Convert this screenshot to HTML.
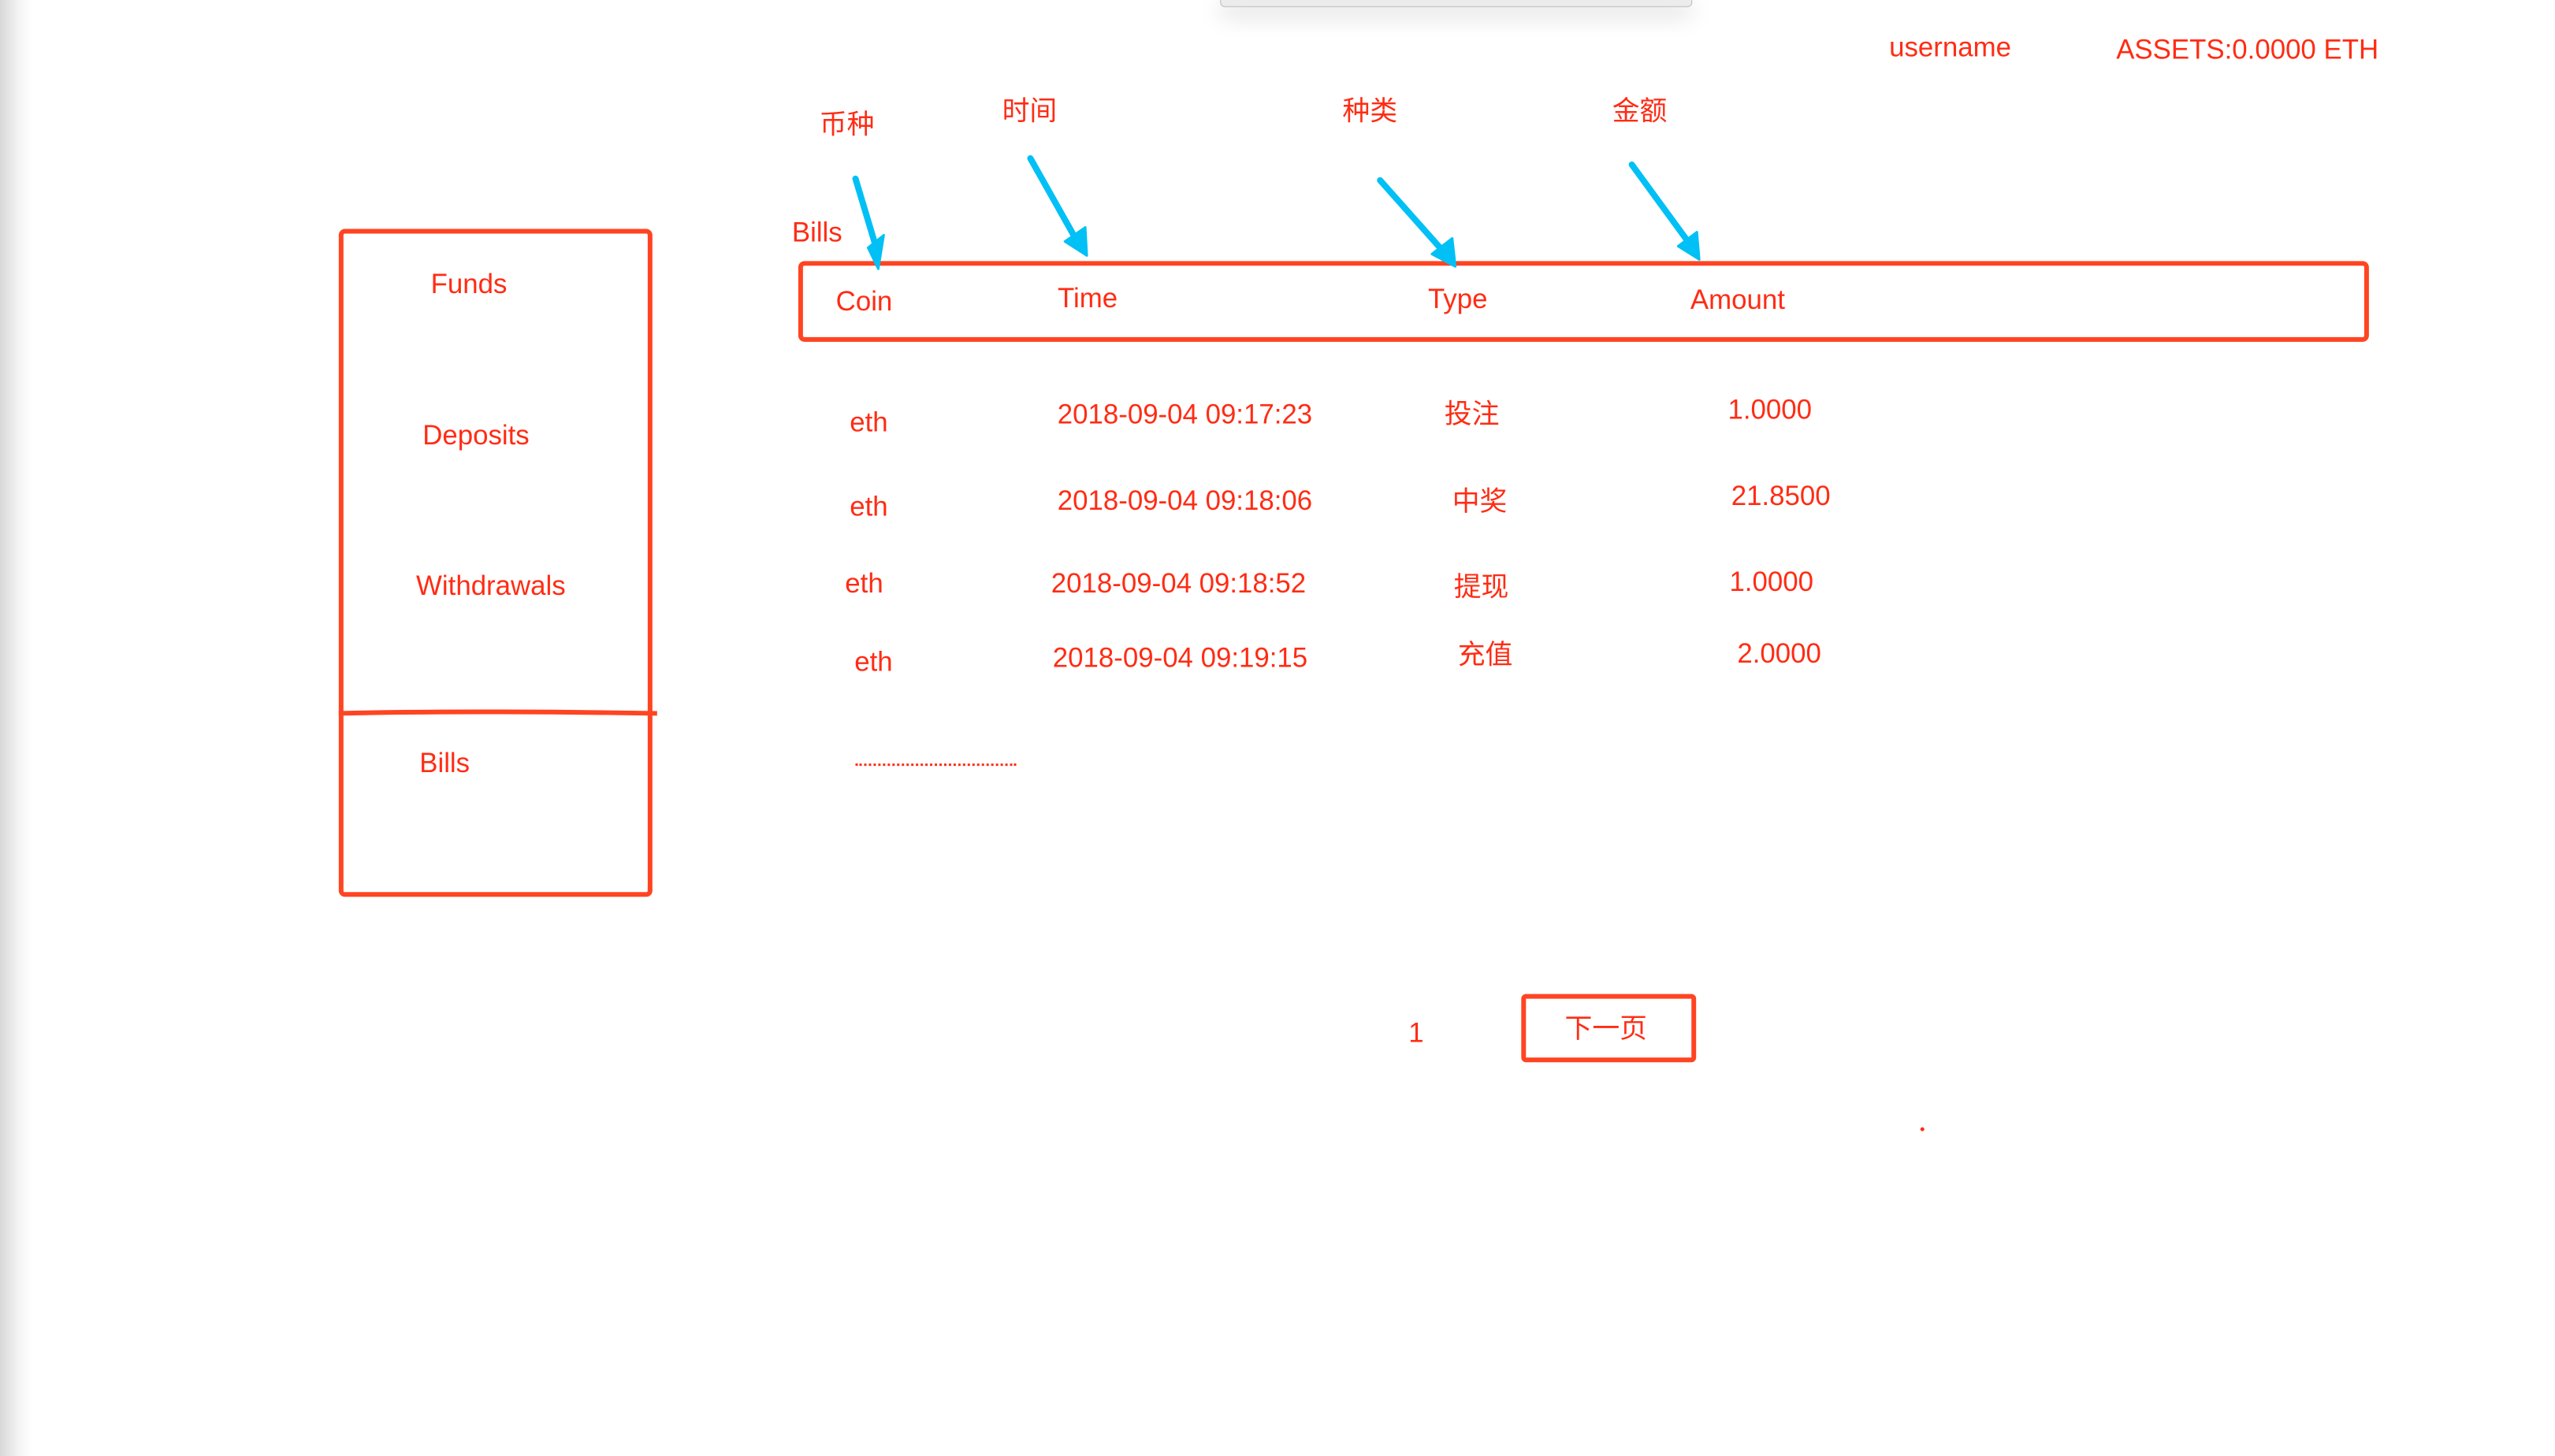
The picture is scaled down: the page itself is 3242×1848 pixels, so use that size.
<!DOCTYPE html>
<html><head><meta charset="utf-8"><style>
html,body{margin:0;padding:0}
body{width:3242px;height:1848px;position:relative;overflow:hidden;background:#fff;font-family:"Liberation Sans","Noto Sans CJK SC",sans-serif;color:#ff2c14;font-size:35px}
#w{position:absolute;left:0;top:0;width:3242px;height:1848px;transform:scale(0.995);transform-origin:0 0}
.t{position:absolute;transform:translate(-50%,-50%);white-space:nowrap}
.shadow{position:absolute;left:0;top:0;width:40px;height:1848px;background:linear-gradient(to right,#d8d8d8,#f4f4f4 60%,#fff)}
.pop{position:absolute;left:1556px;top:-4px;width:600px;height:11px;background:#ececec;border:1px solid #bbb;border-radius:0 0 6px 6px;box-shadow:0 10px 30px rgba(0,0,0,.18)}
.box{position:absolute;border:6px solid #ff4422;border-radius:8px;box-sizing:border-box}
</style></head><body>
<div class="shadow"></div>
<div id="w">
<div class="pop"></div>
<span class="t" style="left:2487px;top:61px">username</span>
<span class="t" style="left:2866px;top:64px">ASSETS:0.0000 ETH</span>

<span class="t" style="left:1080px;top:156px">币种</span>
<span class="t" style="left:1313px;top:139px">时间</span>
<span class="t" style="left:1747px;top:139px">种类</span>
<span class="t" style="left:2091px;top:139px">金额</span>
<span class="t" style="left:1042px;top:297px">Bills</span>

<div class="box" style="left:1018px;top:333px;width:2003px;height:103px"></div>
<span class="t" style="left:1102px;top:385px">Coin</span>
<span class="t" style="left:1387px;top:381px">Time</span>
<span class="t" style="left:1859px;top:382px">Type</span>
<span class="t" style="left:2216px;top:383px">Amount</span>

<svg style="position:absolute;left:0;top:0" width="3242" height="1848">
<g fill="#00c0f5" stroke="#00c0f5" stroke-linecap="round" stroke-linejoin="round">
<path d="M1091 228 L1118 318" stroke-width="8" fill="none"/>
<path d="M1107 316 L1127 300 L1120 343 Z" stroke-width="3"/>
<path d="M1314 202 L1372 305" stroke-width="8" fill="none"/>
<path d="M1358 308 L1384 290 L1386 326 Z" stroke-width="3"/>
<path d="M1760 230 L1840 320" stroke-width="8" fill="none"/>
<path d="M1826 324 L1852 304 L1856 340 Z" stroke-width="3"/>
<path d="M2081 210 L2154 310" stroke-width="8" fill="none"/>
<path d="M2140 314 L2164 296 L2167 331 Z" stroke-width="3"/>
</g>
<path d="M432 910 Q600 906 838 910" stroke="#ff4422" stroke-width="6" fill="none"/>
</svg>

<div class="box" style="left:432px;top:292px;width:400px;height:852px"></div>
<span class="t" style="left:598px;top:363px">Funds</span>
<span class="t" style="left:607px;top:556px">Deposits</span>
<span class="t" style="left:626px;top:748px">Withdrawals</span>
<span class="t" style="left:567px;top:974px">Bills</span>

<span class="t" style="left:1108px;top:539px">eth</span>
<span class="t" style="left:1511px;top:529px">2018-09-04 09:17:23</span>
<span class="t" style="left:1877px;top:525px">投注</span>
<span class="t" style="left:2257px;top:523px">1.0000</span>

<span class="t" style="left:1108px;top:647px">eth</span>
<span class="t" style="left:1511px;top:639px">2018-09-04 09:18:06</span>
<span class="t" style="left:1887px;top:637px">中奖</span>
<span class="t" style="left:2271px;top:633px">21.8500</span>

<span class="t" style="left:1102px;top:745px">eth</span>
<span class="t" style="left:1503px;top:745px">2018-09-04 09:18:52</span>
<span class="t" style="left:1889px;top:746px">提现</span>
<span class="t" style="left:2259px;top:743px">1.0000</span>

<span class="t" style="left:1114px;top:845px">eth</span>
<span class="t" style="left:1505px;top:840px">2018-09-04 09:19:15</span>
<span class="t" style="left:1894px;top:832px">充值</span>
<span class="t" style="left:2269px;top:834px">2.0000</span>

<div style="position:absolute;left:1091px;top:974px;width:205px;border-top:3px dotted #ff2c14"></div>

<span class="t" style="left:1806px;top:1318px">1</span>
<div class="box" style="left:1940px;top:1268px;width:223px;height:87px;border-radius:6px"></div>
<span class="t" style="left:2048px;top:1309px">下一页</span>
<div style="position:absolute;left:2449px;top:1438px;width:5px;height:5px;border-radius:50%;background:#ff2c14"></div>
</div>
</body></html>
